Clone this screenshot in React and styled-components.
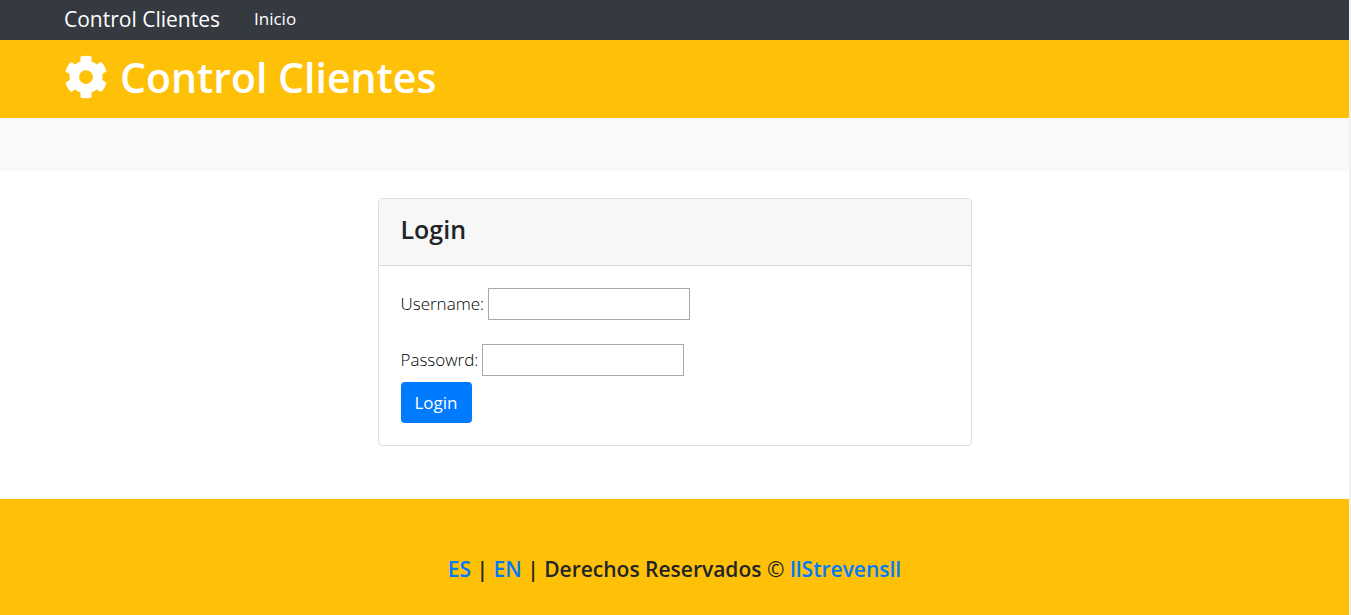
import React from "react";
import styled, { createGlobalStyle } from "styled-components";
import { FaCog } from "react-icons/fa";

const GlobalStyle = createGlobalStyle`
  *, *::before, *::after { box-sizing: border-box; }
  body {
    margin: 0;
    background: #fff;
    color: #212529;
    font-family: "Segoe UI", "Open Sans", "Noto Sans", sans-serif;
    font-size: 17px;
    line-height: 26px;
  }
`;

const Page = styled.div`
  display: flex;
  flex-direction: column;
  min-height: 100vh;
  border-right: 2px solid #f0f0f0;
`;

const Navbar = styled.nav`
  display: flex;
  align-items: center;
  gap: 34px;
  height: 40px;
  padding: 0 64px 2px;
  background: #343a40;
`;

const NavLink = styled.a`
  color: #fff;
  font-size: ${({ $brand }) => ($brand ? "21px" : "17px")};
  text-decoration: none;
  white-space: nowrap;
`;

const Banner = styled.header`
  padding: 10px 64px 14px;
  background: #ffc107;
`;

const BannerTitle = styled.h1`
  display: flex;
  align-items: center;
  gap: 12px;
  margin: 0;
  color: #fff;
  font-size: 41px;
  font-weight: 600;
  line-height: 54px;

  svg {
    width: 44px;
    height: 44px;
  }
`;

const ActionsBar = styled.section`
  height: 53px;
  background: #f8f9fa;
`;

const Main = styled.main`
  flex: 1;
  display: flex;
  justify-content: center;
  align-items: flex-start;
  padding: 27px 16px 53px;
`;

const Card = styled.section`
  width: 100%;
  max-width: 594px;
  border: 1px solid #dfdfdf;
  border-radius: 4px;
  overflow: hidden;
`;

const CardHeader = styled.div`
  padding: 13px 22px 19px;
  border-bottom: 1px solid #dadada;
  background: #f7f7f7;
`;

const CardTitle = styled.h2`
  margin: 0;
  font-size: 25px;
  font-weight: 600;
  line-height: 34px;
`;

const LoginForm = styled.form`
  display: flex;
  flex-direction: column;
  align-items: flex-start;
  padding: 22px;
`;

const Field = styled.div`
  display: flex;
  align-items: center;
  gap: 4px;
  margin-bottom: ${({ $last }) => ($last ? "6px" : "24px")};
`;

const Label = styled.label`
  color: #000;
  font-size: 17px;
  font-weight: 300;
`;

const TextInput = styled.input`
  width: 202px;
  height: 32px;
  padding: 2px 4px;
  border: 1px solid #a9a9a9;
  background: #fff;
  font: inherit;
`;

const SubmitButton = styled.button`
  height: 41px;
  padding: 0 14px;
  border: 0;
  border-radius: 4px;
  background: #007bff;
  color: #fff;
  font: inherit;
  cursor: pointer;
`;

const Footer = styled.footer`
  padding: 53px 16px 29px;
  background: #ffc107;
  text-align: center;
`;

const FooterText = styled.p`
  margin: 0;
  font-size: 21px;
  font-weight: 600;
  line-height: 34px;
`;

const FooterLink = styled.a`
  color: #007bff;
  text-decoration: none;
`;

const Copyright = styled.span`
  font-weight: 400;
`;

export default function App() {
  return (
    <>
      <GlobalStyle />
      <Page>
        <Navbar>
          <NavLink href="#" $brand>Control Clientes</NavLink>
          <NavLink href="#">Inicio</NavLink>
        </Navbar>
        <Banner>
          <BannerTitle>
            <FaCog aria-hidden="true" />
            Control Clientes
          </BannerTitle>
        </Banner>
        <ActionsBar />
        <Main>
          <Card>
            <CardHeader>
              <CardTitle>Login</CardTitle>
            </CardHeader>
            <LoginForm onSubmit={(event) => event.preventDefault()}>
              <Field>
                <Label htmlFor="username">Username:</Label>
                <TextInput id="username" name="username" type="text" />
              </Field>
              <Field $last>
                <Label htmlFor="password">Passowrd:</Label>
                <TextInput id="password" name="password" type="password" />
              </Field>
              <SubmitButton type="submit">Login</SubmitButton>
            </LoginForm>
          </Card>
        </Main>
        <Footer>
          <FooterText>
            <FooterLink href="#es">ES</FooterLink> | <FooterLink href="#en">EN</FooterLink> | Derechos
            Reservados <Copyright>©</Copyright> <FooterLink href="#author">llStrevensll</FooterLink>
          </FooterText>
        </Footer>
      </Page>
    </>
  );
}
